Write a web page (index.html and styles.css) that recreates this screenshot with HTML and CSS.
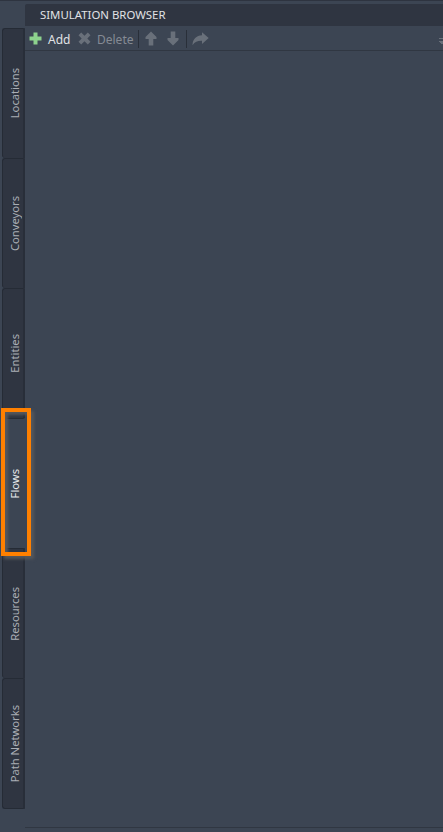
FILE: index.html
```
<!DOCTYPE html>
<html lang="en">
<head>
<meta charset="utf-8">
<title>Simulation Browser</title>
<link rel="stylesheet" href="styles.css">
</head>
<body>
<div class="palette">
  <nav class="tabs">
    <div class="tab"><span class="label">Locations</span></div>
    <div class="tab"><span class="label">Conveyors</span></div>
    <div class="tab"><span class="label">Entities</span></div>
    <div class="tab active"><span class="label">Flows</span><i class="highlight"></i></div>
    <div class="tab"><span class="label">Resources</span></div>
    <div class="tab"><span class="label">Path Networks</span></div>
  </nav>
  <main class="panel">
    <header class="title"><span>SIMULATION BROWSER</span></header>
    <div class="toolbar">
      <svg class="icon plus" width="13" height="13" viewBox="0 0 13 13"><path d="M4.5 .5h4v4h4v4h-4v4h-4v-4h-4v-4h4z"/></svg>
      <span class="add">Add</span>
      <svg class="icon cross" width="13" height="13" viewBox="0 0 13 13"><path d="M3.2.5 6.5 3.7 9.8.5 12.5 3.2 9.3 6.5l3.2 3.3-2.7 2.7-3.3-3.2-3.3 3.2L.5 9.8l3.2-3.3L.5 3.2z"/></svg>
      <span class="delete">Delete</span>
      <i class="separator"></i>
      <svg class="icon up" width="12" height="15" viewBox="0 0 12 15"><path d="M6 .5 11.5 6v2H8.3v6.5H3.7V8H.5V6z"/></svg>
      <svg class="icon down" width="12" height="15" viewBox="0 0 12 15"><path d="M6 14.5.5 9V7h3.2V.5h4.6V7h3.2v2z"/></svg>
      <i class="separator second"></i>
      <svg class="icon share" width="17" height="14" viewBox="0 0 17 14"><path d="M10 .3 16.7 6 10 11.9V8.7C6 8.5 3 9.4.5 13.2.6 7.2 4.4 3.5 10 3.3z"/></svg>
      <svg class="overflow" width="4" height="7" viewBox="0 0 4 7"><path d="M0 0h4v1H0zM0 3h4v1H0zM1 4h3v1H1zM2 5h2v1H2z"/></svg>
    </div>
    <div class="content"></div>
  </main>
</div>
</body>
</html>
```
FILE: styles.css
```
* { box-sizing: border-box; }
body {
  margin: 0;
  background: #3c4553;
  color: #e0e2e5;
  font: 11.5px/16px "Noto Sans", "Open Sans", sans-serif;
  overflow: hidden;
}
.palette {
  display: flex;
  height: 832px;
  padding: 3px 0 4px 2px;
  border-top: 1px solid #2e3440;
}
.tabs {
  width: 23px;
  flex: none;
  padding-top: 24px;
}
.tab {
  position: relative;
  display: flex;
  align-items: center;
  justify-content: center;
  height: 130px;
  padding-left: 3px;
  background: #2f3541;
  border: 1px solid #252b35;
  border-right: 2px solid #282e39;
  border-bottom: 0;
  border-radius: 3px 0 0 3px;
}
.tab:last-child { height: 131px; border-bottom: 1px solid #252b35; }
.tab.active {
  background: #3c4553;
  border-color: #272d37 transparent transparent;
}
.label {
  writing-mode: vertical-rl;
  transform: rotate(180deg);
  white-space: nowrap;
  line-height: 16px;
  font-size: 11.2px;
  color: #aaaeb5;
}
.active .label { color: #e6e8ea; }
.highlight {
  position: absolute;
  z-index: 2;
  left: -2px;
  top: -11px;
  width: 30px;
  height: 148px;
  border: 4px solid #ff8000;
  box-shadow: 3px 3px 3px #56585c, inset 3px 3px 3px #56585c;
}
.panel {
  display: flex;
  flex: 1;
  flex-direction: column;
  min-width: 0;
}
.title {
  height: 22px;
  padding: 3px 15px;
  background: #2f3541;
  border-radius: 2px 0 0 0;
  font-size: 11.4px;
}
.toolbar {
  display: flex;
  align-items: center;
  height: 25px;
  padding: 1px 0 0 4px;
  border-bottom: 1px solid #303742;
  font-size: 12px;
}
.icon { flex: none; fill: #69707a; }
.plus { fill: #8dd28d; }
.add { width: 22px; margin: 2px 0 0 6px; }
.cross { margin-left: 8px; }
.delete { width: 35px; margin: 2px 0 0 6px; color: #858b94; }
.separator {
  width: 1px;
  height: 18px;
  margin-left: 6px;
  background: #292f39;
}
.up { margin-left: 6px; }
.down { margin-left: 10px; }
.separator.second { margin-left: 7px; }
.share { margin-left: 5px; }
.overflow { margin: 6px 0 0 auto; fill: #69707a; }
.content { flex: 1; border-bottom: 1px solid #303742; }
```
